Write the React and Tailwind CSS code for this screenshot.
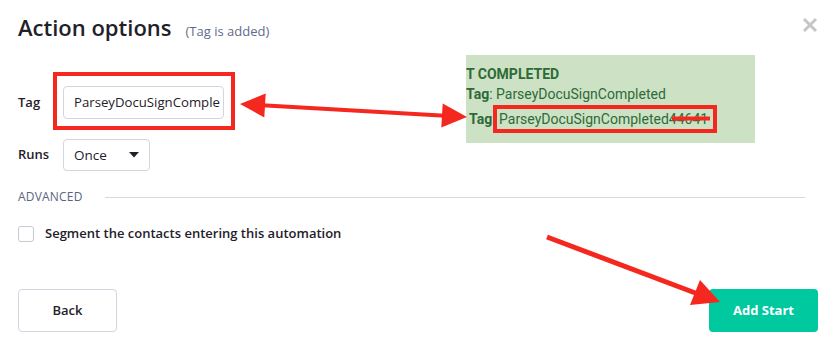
import React from "react";

export default function App() {
  return (
    <div className="relative w-[832px] h-[346px] bg-white overflow-hidden font-['Open_Sans',sans-serif] text-[#1f2129]">
      {/* Header */}
      <div className="flex items-start justify-between pl-[18px] pr-[14px] pt-[12px] h-[42px]">
        <div className="flex items-baseline">
          <span className="text-[22px] leading-[30px] font-semibold text-[#1f2129]">Action options</span>
          <span className="ml-[14px] text-[13px] text-[#5f6a8c]">(Tag is added)</span>
        </div>
        <svg width="16" height="16" viewBox="0 0 16 16" className="mt-[5px]">
          <path d="M2 2 L14 14 M14 2 L2 14" stroke="#c6c6c6" strokeWidth="3" strokeLinecap="butt" />
        </svg>
      </div>

      {/* Form */}
      <div className="flex flex-col pl-[18px] pr-[27px] mt-[44px]">
        <div className="flex items-center h-[33px]">
          <span className="w-[45px] text-[13px] font-semibold">Tag</span>
          <div className="w-[161px] h-[33px] border border-[#d3d6e0] rounded-[4px] flex items-center pl-[10px] text-[13.2px] overflow-hidden whitespace-nowrap">
            ParseyDocuSignComple
          </div>
        </div>
        <div className="flex items-center h-[32px] mt-[20px]">
          <span className="w-[45px] text-[13px] font-semibold">Runs</span>
          <div className="w-[87px] h-[32px] border border-[#d3d6e0] rounded-[4px] flex items-center justify-between pl-[10px] pr-[10px] text-[13.5px]">
            <span>Once</span>
            <svg width="10" height="6" viewBox="0 0 10 6">
              <path d="M0 0 L10 0 L5 5.5 Z" fill="#1f2129" />
            </svg>
          </div>
        </div>
        <div className="flex items-center mt-[16px] h-[20px]">
          <span className="text-[12px] text-[#5a6482] tracking-[0.2px]">ADVANCED</span>
          <div className="flex-1 h-px bg-[#d5d8e0] ml-[22px]"></div>
        </div>
        <div className="flex items-center mt-[19px] h-[16px]">
          <div className="w-[16px] h-[16px] border border-[#c5c9d4] rounded-[3px]"></div>
          <span className="ml-[11px] text-[13px] font-semibold">Segment the contacts entering this automation</span>
        </div>
      </div>

      {/* Footer */}
      <div className="flex justify-between pl-[18px] pr-[14px] mt-[47px]">
        <div className="w-[99px] h-[43px] border border-[#d3d6e0] rounded-[4px] flex items-center justify-center text-[13px] font-semibold">
          Back
        </div>
        <div className="w-[109px] h-[43px] bg-[#00c99f] rounded-[4px] flex items-center justify-center text-[13px] font-bold text-white">
          Add Start
        </div>
      </div>

      {/* Pasted screenshot snippet */}
      <div className="absolute left-[466px] top-[55px] w-[289px] h-[88px] bg-[#cde2c5] font-['Roboto',sans-serif] text-[14px] leading-[21px] text-[#2e6a37] pt-[9px] whitespace-nowrap">
        <div className="font-bold">T COMPLETED</div>
        <div className="-mt-px"><span className="font-bold">Tag</span>: ParseyDocuSignCompleted</div>
        <div className="pl-[3px] mt-[4px]"><span className="font-bold">Tag</span>: ParseyDocuSignCompleted44641</div>
      </div>

      {/* Annotations */}
      <div className="absolute left-[53px] top-[72px] w-[182px] h-[58px] border-[4px] border-[#f5281f]"></div>
      <div className="absolute left-[493px] top-[105px] w-[224px] h-[28px] border-[4px] border-[#f5281f]"></div>
      <svg className="absolute left-0 top-0 pointer-events-none" width="832" height="346" viewBox="0 0 832 346">
        <line x1="262" y1="105.3" x2="445" y2="115.7" stroke="#f5281f" strokeWidth="4" />
        <polygon points="240,104 264.3,117.4 265.7,93.4" fill="#f5281f" />
        <polygon points="467,117 441.3,127.6 442.7,103.6" fill="#f5281f" />
        <line x1="672" y1="118.5" x2="710" y2="118.5" stroke="#f5281f" strokeWidth="4" />
        <line x1="547" y1="237" x2="698" y2="294" stroke="#f5281f" strokeWidth="5" />
        <polygon points="720,302 690,305 700,280" fill="#f5281f" />
      </svg>
    </div>
  );
}
